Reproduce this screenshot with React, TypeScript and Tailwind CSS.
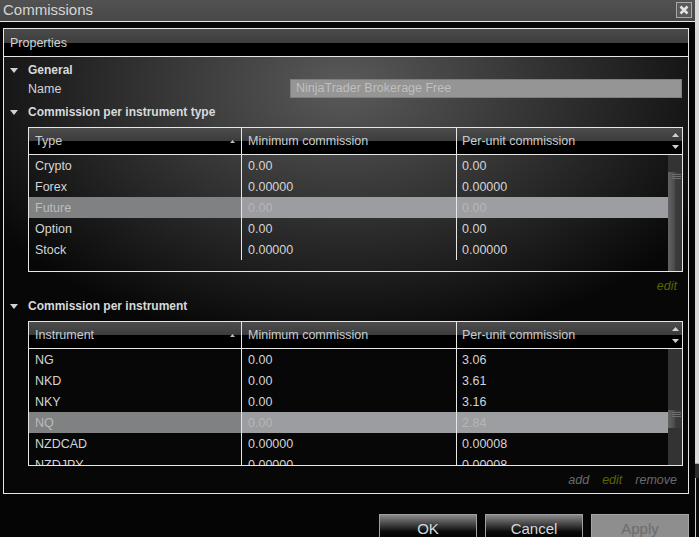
import React from "react";

type Row = { name: string; min: string; per: string; selected?: boolean };

const TYPE_ROWS: Row[] = [
  { name: "Crypto", min: "0.00", per: "0.00" },
  { name: "Forex", min: "0.00000", per: "0.00000" },
  { name: "Future", min: "0.00", per: "0.00", selected: true },
  { name: "Option", min: "0.00", per: "0.00" },
  { name: "Stock", min: "0.00000", per: "0.00000" },
];

const INSTRUMENT_ROWS: Row[] = [
  { name: "NG", min: "0.00", per: "3.06" },
  { name: "NKD", min: "0.00", per: "3.61" },
  { name: "NKY", min: "0.00", per: "3.16" },
  { name: "NQ", min: "0.00", per: "2.84", selected: true },
  { name: "NZDCAD", min: "0.00000", per: "0.00008" },
  { name: "NZDJPY", min: "0.00000", per: "0.00008" },
];

function Disclosure() {
  return (
    <div className="w-[24px] pl-[6px] flex items-center">
      <svg width="8" height="5" viewBox="0 0 8 5">
        <polygon points="0,0 8,0 4,5" fill="#d2d2d2" />
      </svg>
    </div>
  );
}

function SectionHeader({ label }: { label: string }) {
  return (
    <div className="flex items-center h-[20px]">
      <Disclosure />
      <span className="font-bold text-[12px] text-[#d6dade]">{label}</span>
    </div>
  );
}

function ScrollBar({ thumbTop, thumbHeight }: { thumbTop: number; thumbHeight: number }) {
  return (
    <div className="w-[14px] bg-[#333333] h-full">
      <div
        className="relative bg-[linear-gradient(to_right,#646464,#4c4c4c_45%,#3a3a3a_55%,#383838)]"
        style={{ marginTop: thumbTop, height: thumbHeight }}
      >
        <div className="absolute left-[4px] right-[1px] top-[2px] h-px bg-[#6e6e6e]" />
        <div className="absolute left-[4px] right-[1px] top-[4px] h-px bg-[#6e6e6e]" />
        <div className="absolute left-[4px] right-[1px] top-[6px] h-px bg-[#6e6e6e]" />
      </div>
    </div>
  );
}

function CommissionTable({
  firstColumn,
  rows,
  thumbTop,
  thumbHeight,
}: {
  firstColumn: string;
  rows: Row[];
  thumbTop: number;
  thumbHeight: number;
}) {
  return (
    <div className="border border-[#e6e6e6] h-[145px] flex flex-col">
      {/* Header */}
      <div className="shrink-0 flex h-[27px] border-b border-[#e6e6e6] bg-[linear-gradient(to_bottom,#4c4c4c_0%,#3c3c3c_50%,#000_50%,#000_100%)] text-[12.5px] text-[#c8ccd0]">
        <div className="w-[213px] border-r border-[#e6e6e6] flex items-center justify-between pl-[6px] pr-[6px] pt-[1px]">
          <span>{firstColumn}</span>
          <svg width="5" height="3" viewBox="0 0 5 3">
            <polygon points="0,3 5,3 2.5,0" fill="#bdbdbd" />
          </svg>
        </div>
        <div className="w-[215px] border-r border-[#e6e6e6] flex items-center pl-[6px] pt-[1px]">
          Minimum commission
        </div>
        <div className="flex-1 flex items-center pl-[5px] pt-[1px]">Per-unit commission</div>
        <div className="w-[14px] flex flex-col items-center justify-center gap-[8px]">
          <svg width="7" height="4" viewBox="0 0 7 4">
            <polygon points="0,4 7,4 3.5,0" fill="#d0d0d0" />
          </svg>
          <svg width="7" height="4" viewBox="0 0 7 4">
            <polygon points="0,0 7,0 3.5,4" fill="#d0d0d0" />
          </svg>
        </div>
      </div>
      {/* Body */}
      <div className="flex flex-1 overflow-hidden">
        <div className="flex-1 overflow-hidden">
          {rows.map((r) => (
            <div key={r.name} className="flex h-[21px] text-[12.5px]">
              <div
                className={`w-[213px] border-r border-[#e6e6e6] flex items-center pl-[6px] pt-[1px] ${
                  r.selected ? "bg-[#808183] text-[#bcbcbc]" : "text-[#d4d4d4]"
                }`}
              >
                {r.name}
              </div>
              <div
                className={`w-[215px] border-r border-[#e6e6e6] flex items-center pl-[6px] pt-[1px] ${
                  r.selected ? "bg-[#9c9da0] text-[#b6b6b6]" : "text-[#d4d4d4]"
                }`}
              >
                {r.min}
              </div>
              <div
                className={`flex-1 flex items-center pl-[5px] pt-[1px] ${
                  r.selected ? "bg-[#9d9ea1] text-[#b6b6b6]" : "text-[#d4d4d4]"
                }`}
              >
                {r.per}
              </div>
            </div>
          ))}
        </div>
        <ScrollBar thumbTop={thumbTop} thumbHeight={thumbHeight} />
      </div>
    </div>
  );
}

function DialogButton({ label, disabled }: { label: string; disabled?: boolean }) {
  return (
    <button
      className={`w-[98px] h-[26px] border text-[15px] leading-none flex items-start justify-center pt-[6px] ${
        disabled
          ? "bg-[#8e8e8e] border-[#a6a6a6] text-[#6c6c6c]"
          : "bg-[linear-gradient(to_bottom,#8a8a8a_0%,#4a4a4a_35%,#0a0a0a_70%,#000_100%)] border-[#a0a0a0] text-[#d4dade]"
      }`}
    >
      {label}
    </button>
  );
}

export default function App() {
  return (
    <div className="w-[699px] h-[537px] overflow-hidden flex font-['Liberation_Sans',Arial,sans-serif] bg-[#050505]">
      {/* Dialog window */}
      <div className="w-[695px] h-full flex flex-col bg-[#050505] overflow-hidden">
        {/* Title bar */}
        <div className="shrink-0 h-[22px] border-b border-[#e8e8e8] bg-[linear-gradient(to_bottom,#525252,#484848)] flex items-center justify-between pl-[3px] pr-[3px]">
          <span className="text-[15px] text-[#d6d6d6] leading-none -mt-[2px]">Commissions</span>
          <div className="w-[16px] h-[16px] border border-[#a8a8a8] bg-[#5a5a5a] flex items-center justify-center -mt-[2px]">
            <svg width="10" height="10" viewBox="0 0 10 10">
              <path d="M1.5 1.5 L8.5 8.5 M8.5 1.5 L1.5 8.5" stroke="#e2e2e2" strokeWidth="2.6" />
            </svg>
          </div>
        </div>

        {/* Body */}
        <div className="shrink-0 pl-[3px] pr-[6px] pt-[6px]">
          <div className="border border-[#e6e6e6] flex flex-col">
            <div className="h-[28px] border-b border-[#e6e6e6] bg-[linear-gradient(to_bottom,#4a4a4a_0%,#3e3e3e_52%,#000_52%,#000_100%)] flex items-center pl-[6px] pt-[2px] text-[12.5px] text-[#d2d2d2]">
              Properties
            </div>
            <div className="bg-[radial-gradient(ellipse_420px_260px_at_340px_30px,#5a5a5a_0%,#070707_100%)] pt-[4px] pb-[3px]">
              <div className="flex items-center h-[18px]">
                <Disclosure />
                <span className="font-bold text-[12px] text-[#d6dade]">General</span>
              </div>
              <div className="flex items-center h-[19px]">
                <span className="pl-[24px] pt-[1px] text-[12.5px] text-[#d4d4d4] w-[286px]">Name</span>
                <div className="w-[392px] h-full bg-[#959595] border border-[#7e7e7e] flex items-center pl-[5px] text-[12.5px] text-[#bfbfbf]">
                  NinjaTrader Brokerage Free
                </div>
              </div>

              <div className="mt-[4px]">
                <SectionHeader label="Commission per instrument type" />
              </div>
              <div className="pl-[24px] pr-[5px] mt-[5px]">
                <CommissionTable firstColumn="Type" rows={TYPE_ROWS} thumbTop={17} thumbHeight={99} />
                <div className="mt-[4px] h-[20px] flex items-center justify-end pr-[6px] text-[12.5px] italic">
                  <span className="text-[#5a6400]">edit</span>
                </div>
              </div>

              <SectionHeader label="Commission per instrument" />
              <div className="pl-[24px] pr-[5px] mt-[5px]">
                <CommissionTable firstColumn="Instrument" rows={INSTRUMENT_ROWS} thumbTop={61} thumbHeight={18} />
                <div className="mt-[4px] h-[20px] flex items-center justify-end gap-[13px] pr-[6px] text-[12.5px] italic">
                  <span className="text-[#6a6a6a]">add</span>
                  <span className="text-[#5a6400]">edit</span>
                  <span className="text-[#6a6a6a]">remove</span>
                </div>
              </div>
            </div>
          </div>

          <div className="mt-[20px] flex justify-end gap-[8px]">
            <DialogButton label="OK" />
            <DialogButton label="Cancel" />
            <DialogButton label="Apply" disabled />
          </div>
        </div>
      </div>

      {/* Desktop strip behind the dialog */}
      <div className="flex-1 flex flex-col">
        <div className="h-[463px] bg-[#dadada]" />
        <div className="h-[15px] border-t border-[#a8a8a8] bg-[#2e2e2e]" />
        <div className="flex-1 bg-[#0c0c0c] border-l border-[#cfcfcf]" />
      </div>
    </div>
  );
}
